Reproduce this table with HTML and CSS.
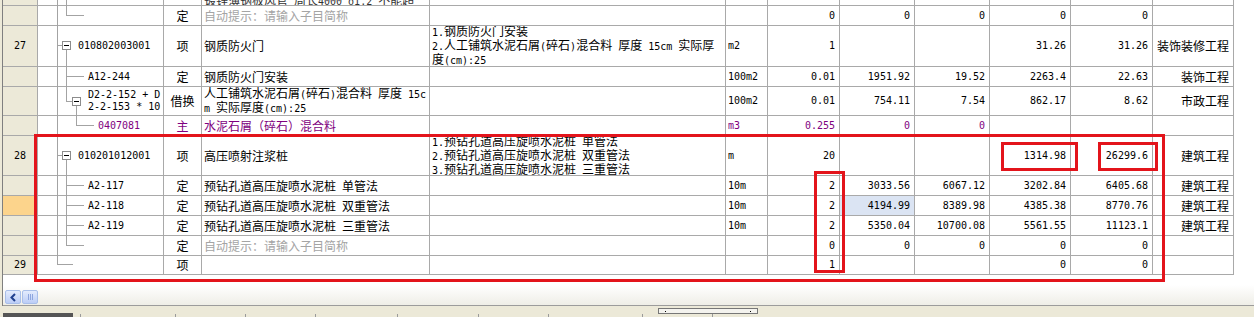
FILE: index.html
```html
<!DOCTYPE html>
<html lang="zh-CN">
<head>
<meta charset="utf-8">
<title>清单</title>
<link rel="stylesheet" href="styles.css">
</head>
<body>
<div class="app">
  <div class="panel">
    <div class="rows">
      <div class="row hp">
        <div class="rn"></div><div class="code"></div><div class="typ"></div>
        <div class="desc low"><span class="cut">镀锌薄钢板风管 周长<span class="l">4000</span> <span class="l">δ1.2</span> 不能超</span></div>
        <div></div><div></div><div></div><div></div><div></div><div></div><div></div><div></div>
      </div>
      <div class="row">
        <div class="rn"></div><div class="code"></div><div class="typ">定</div>
        <div class="desc hint">自动提示：请输入子目简称</div><div class="feat"></div><div class="unit"></div>
        <div class="num">0</div><div class="num">0</div><div class="num">0</div><div class="num">0</div><div class="num">0</div><div class="cat"></div>
      </div>
      <div class="row h41">
        <div class="rn">27</div><div class="code lv1">010802003001</div><div class="typ">项</div>
        <div class="desc">钢质防火门</div>
        <div class="feat"><div class="ml"><span class="l">1.</span>钢质防火门安装<br><span class="l">2.</span>人工铺筑水泥石屑<span class="l">(</span>碎石<span class="l">)</span>混合料 厚度 <span class="l">15cm</span> 实际厚<br>度<span class="l">(cm):25</span></div></div>
        <div class="unit">m2</div>
        <div class="num">1</div><div class="num"></div><div class="num"></div><div class="num">31.26</div><div class="num">31.26</div><div class="cat">装饰装修工程</div>
      </div>
      <div class="row">
        <div class="rn"></div><div class="code lv2">A12-244</div><div class="typ">定</div>
        <div class="desc">钢质防火门安装</div><div class="feat"></div><div class="unit">100m2</div>
        <div class="num">0.01</div><div class="num">1951.92</div><div class="num">19.52</div><div class="num">2263.4</div><div class="num">22.63</div><div class="cat">装饰工程</div>
      </div>
      <div class="row h29">
        <div class="rn"></div><div class="code lv2"><div class="ml">D2-2-152 + D<br>2-2-153 * 10</div></div><div class="typ">借换</div>
        <div class="desc"><div class="ml">人工铺筑水泥石屑<span class="l">(</span>碎石<span class="l">)</span>混合料 厚度 <span class="l">15c</span><br><span class="l">m</span> 实际厚度<span class="l">(cm):25</span></div></div>
        <div class="feat"></div><div class="unit">100m2</div>
        <div class="num">0.01</div><div class="num">754.11</div><div class="num">7.54</div><div class="num">862.17</div><div class="num">8.62</div><div class="cat">市政工程</div>
      </div>
      <div class="row mat">
        <div class="rn"></div><div class="code lv3">0407081</div><div class="typ">主</div>
        <div class="desc">水泥石屑（碎石）混合料</div><div class="feat"></div><div class="unit">m3</div>
        <div class="num">0.255</div><div class="num">0</div><div class="num">0</div><div class="num"></div><div class="num"></div><div class="cat"></div>
      </div>
      <div class="row h40">
        <div class="rn">28</div><div class="code lv1">010201012001</div><div class="typ">项</div>
        <div class="desc">高压喷射注浆桩</div>
        <div class="feat"><div class="ml"><span class="l">1.</span>预钻孔道高压旋喷水泥桩 单管法<br><span class="l">2.</span>预钻孔道高压旋喷水泥桩 双重管法<br><span class="l">3.</span>预钻孔道高压旋喷水泥桩 三重管法</div></div>
        <div class="unit">m</div>
        <div class="num">20</div><div class="num"></div><div class="num"></div><div class="num">1314.98</div><div class="num">26299.6</div><div class="cat">建筑工程</div>
      </div>
      <div class="row">
        <div class="rn"></div><div class="code lv2">A2-117</div><div class="typ">定</div>
        <div class="desc">预钻孔道高压旋喷水泥桩 单管法</div><div class="feat"></div><div class="unit">10m</div>
        <div class="num">2</div><div class="num">3033.56</div><div class="num">6067.12</div><div class="num">3202.84</div><div class="num">6405.68</div><div class="cat">建筑工程</div>
      </div>
      <div class="row">
        <div class="rn cur"></div><div class="code lv2">A2-118</div><div class="typ">定</div>
        <div class="desc">预钻孔道高压旋喷水泥桩 双重管法</div><div class="feat"></div><div class="unit">10m</div>
        <div class="num">2</div><div class="num sel">4194.99</div><div class="num">8389.98</div><div class="num">4385.38</div><div class="num">8770.76</div><div class="cat">建筑工程</div>
      </div>
      <div class="row">
        <div class="rn"></div><div class="code lv2">A2-119</div><div class="typ">定</div>
        <div class="desc">预钻孔道高压旋喷水泥桩 三重管法</div><div class="feat"></div><div class="unit">10m</div>
        <div class="num">2</div><div class="num">5350.04</div><div class="num">10700.08</div><div class="num">5561.55</div><div class="num">11123.1</div><div class="cat">建筑工程</div>
      </div>
      <div class="row">
        <div class="rn"></div><div class="code"></div><div class="typ">定</div>
        <div class="desc hint">自动提示：请输入子目简称</div><div class="feat"></div><div class="unit"></div>
        <div class="num">0</div><div class="num">0</div><div class="num">0</div><div class="num">0</div><div class="num">0</div><div class="cat"></div>
      </div>
      <div class="row h19">
        <div class="rn">29</div><div class="code"></div><div class="typ">项</div>
        <div class="desc"></div><div class="feat"></div><div class="unit"></div>
        <div class="num">1</div><div class="num"></div><div class="num"></div><div class="num">0</div><div class="num">0</div><div class="cat"></div>
      </div>
    </div>
    <div class="hscroll">
      <span class="sbtn"><svg width="8" height="9" viewBox="0 0 8 9"><path d="M6 1L2.5 4.5L6 8" fill="none" stroke="#21418f" stroke-width="2"/></svg></span>
      <span class="sthumb"><i></i><i></i><i></i></span>
    </div>
  </div>
  <div class="status">
    <span class="pane"></span>
    <span class="tick t1"></span><span class="tick t2"></span><span class="tick t3"></span><span class="tick t4"></span><span class="tick t5"></span><span class="tick t6"></span><span class="tick t7"></span><span class="tick t8"></span><span class="tick t9"></span>
  </div>

  <svg class="tree" width="170" height="280" viewBox="0 0 170 280">
    <g fill="none" stroke="#a3a3a3" stroke-width="1" shape-rendering="crispEdges">
      <path d="M57.5 0V264.5H73"/>
      <path d="M66.5 0V15.5H84"/>
      <path d="M57 45.5H62"/>
      <path d="M66.5 50V101.5"/>
      <path d="M66 76.5H84"/>
      <path d="M66 101.5H72"/>
      <path d="M76.5 106V125.5H94"/>
      <path d="M57 155.5H62"/>
      <path d="M66.5 160V245.5H84"/>
      <path d="M66 185.5H84"/>
      <path d="M66 205.5H84"/>
      <path d="M66 225.5H84"/>
    </g>
    <g fill="#fff" stroke="#8c8c8c" stroke-width="1" shape-rendering="crispEdges">
      <rect x="62.5" y="41.5" width="8" height="8"/>
      <rect x="72.5" y="97.5" width="8" height="8"/>
      <rect x="62.5" y="151.5" width="8" height="8"/>
    </g>
    <g stroke="#000" stroke-width="1" shape-rendering="crispEdges">
      <path d="M64 45.5H69"/>
      <path d="M74 101.5H79"/>
      <path d="M64 155.5H69"/>
    </g>
  </svg>

  <div class="mark big"></div>
  <div class="mark m1"></div>
  <div class="mark m2"></div>
  <div class="mark m3"></div>
  <div class="grip"><i></i><i></i></div>
</div>
</body>
</html>
```

FILE: styles.css
```css
html, body {
  margin: 0;
  padding: 0;
}
body {
  background: #ece9d8;
  width: 1254px;
  height: 317px;
  overflow: hidden;
  font-family: "Noto Sans CJK SC", "Noto Sans", sans-serif;
  font-size: 12px;
  color: #000;
}
.app {
  position: relative;
  width: 1254px;
  height: 317px;
}
.panel {
  margin-left: 2px;
  border-left: 1px solid #7f7f7f;
  background: #fff;
  height: 306px;
  display: flex;
  flex-direction: column;
}
.rows {
  display: flex;
  flex-direction: column;
}
.row {
  display: grid;
  grid-template-columns: 35px 126px 38px 228px 296px 42px 72px 75px 75px 81px 82px 81px;
  height: 20px;
}
.row.hp { height: 6px; }
.row.h41 { height: 41px; }
.row.h40 { height: 40px; }
.row.h29 { height: 29px; }
.row.h19 { height: 19px; }
.row > div {
  box-sizing: border-box;
  border-right: 1px solid #a9a9a9;
  border-bottom: 1px solid #a9a9a9;
  display: flex;
  align-items: center;
  overflow: hidden;
  white-space: nowrap;
  line-height: 12px;
}
.row .low {
  align-items: flex-end;
}
.cut {
  margin-bottom: -3px;
  color: #333;
}
.ml {
  line-height: 12px;
}
.l {
  font-family: "DejaVu Sans Mono", monospace;
  font-size: 10px;
  word-spacing: 0;
}
.rn {
  background: #ece9d8;
  justify-content: center;
  font-family: "DejaVu Sans Mono", monospace;
  font-size: 10px;
}
.rn.cur {
  background: #fcd48c;
}
.code {
  font-family: "DejaVu Sans Mono", monospace;
  font-size: 10px;
  white-space: pre;
}
.code.lv1 { padding-left: 40px; }
.code.lv2 { padding-left: 50px; }
.code.lv3 { padding-left: 60px; }
.typ {
  justify-content: center;
}
.desc, .feat {
  padding-left: 2px;
  word-spacing: 3.3px;
}
.unit {
  padding-left: 2px;
  font-family: "DejaVu Sans Mono", monospace;
  font-size: 10px;
}
.num {
  justify-content: flex-end;
  padding-right: 4px;
  font-family: "DejaVu Sans Mono", monospace;
  font-size: 10px;
}
.num.sel {
  background: #dbe4f3;
}
.cat {
  justify-content: flex-end;
  padding-right: 4px;
}
.hint {
  color: #a4a4a4;
}
.mat > div {
  color: #800080;
}
.hscroll {
  margin-top: auto;
  border-bottom: 1px solid #9c9c9c;
  background: linear-gradient(#ffffff, #efeee7);
  display: flex;
  align-items: flex-start;
  padding: 5px 0 0 2px;
  height: 15px;
  gap: 1px;
}
.sbtn, .sthumb {
  box-sizing: border-box;
  width: 16px;
  height: 14px;
  border: 1px solid #a9bfe9;
  border-radius: 2px;
  background: linear-gradient(#e3ebfd, #bccdf6);
  display: flex;
  align-items: center;
  justify-content: center;
}
.sthumb {
  gap: 1px;
}
.sthumb i {
  width: 1px;
  height: 6px;
  background: #8ea6de;
}
.status {
  height: 11px;
  display: flex;
  align-items: flex-end;
}
.pane {
  margin-left: 3px;
  width: 70px;
  height: 4px;
  background: #555;
}
.tick {
  width: 1px;
  height: 3px;
  background: #9a9a9a;
}
.t1 { margin-left: 7px; }
.t2 { margin-left: 94px; }
.t3 { margin-left: 69px; }
.t4 { margin-left: 69px; }
.t5 { margin-left: 81px; }
.t6 { margin-left: 80px; }
.t7 { margin-left: 69px; }
.t8 { margin-left: 93px; }
.t9 { margin-left: 69px; }
.tree {
  position: absolute;
  left: 0;
  top: 0;
  pointer-events: none;
}
.mark {
  position: absolute;
  box-sizing: border-box;
  border: 3px solid #e3141b;
  pointer-events: none;
}
.mark.big { left: 34px; top: 134px; width: 1131px; height: 148px; }
.mark.m1 { left: 1001px; top: 142px; width: 77px; height: 29px; }
.mark.m2 { left: 1098px; top: 142px; width: 60px; height: 29px; }
.mark.m3 { left: 814px; top: 171px; width: 31px; height: 102px; }
.grip {
  position: absolute;
  left: 658px;
  top: 308px;
  width: 100px;
  height: 6px;
  box-sizing: border-box;
  border: 1px solid #777;
  background: #f4f3ee;
  display: flex;
  justify-content: space-between;
  align-items: center;
  padding: 0 6px;
}
.grip i {
  width: 1px;
  height: 1px;
  background: #000;
}
```
